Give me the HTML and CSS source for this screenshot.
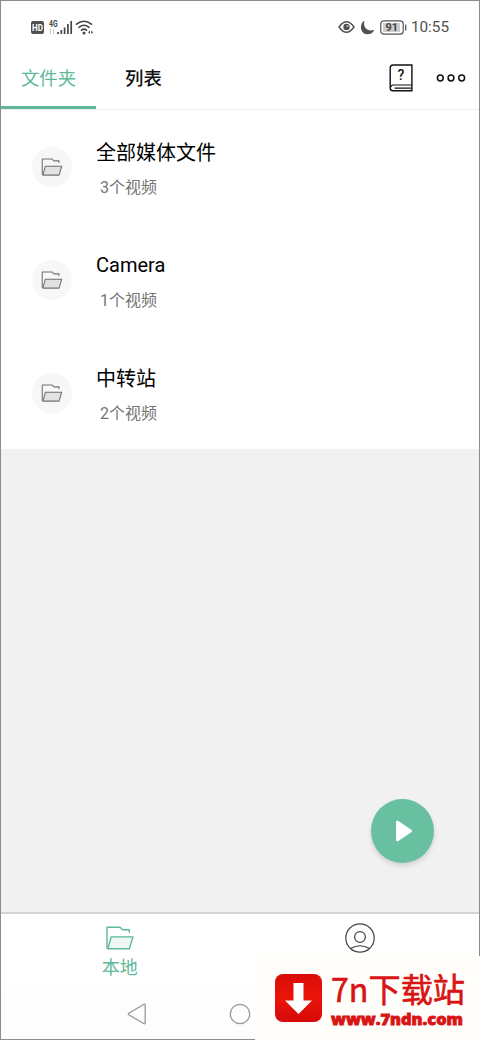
FILE: index.html
```html
<!DOCTYPE html>
<html lang="zh-CN">
<head>
<meta charset="utf-8">
<title>文件夹</title>
<link rel="stylesheet" href="styles.css">
</head>
<body>
<svg class="defs" width="0" height="0">
  <symbol id="folder" viewBox="0 0 28 24">
    <path class="back" d="M1 22.8V1.3h13l2.6 2.5h6.7v3"/>
    <path class="front" d="M5.2 10.9H27l-3.6 11.9H1.8Z"/>
  </symbol>
</svg>
<div class="phone">
  <div class="status">
    <svg class="status-left" width="66" height="18" viewBox="0 0 66 18">
      <rect x="1" y="3" width="13" height="13" rx="2" fill="#505050"/>
      <text x="7.5" y="12.8" class="hd" text-anchor="middle" textLength="11" lengthAdjust="spacingAndGlyphs">HD</text>
      <text x="19" y="8.500" class="net" textLength="8.500" lengthAdjust="spacingAndGlyphs">4G</text>
      <path d="M20.5 16v-5m-1 1 1-1M23.5 11v5m1-1-1 1" stroke="#bbb" fill="none" stroke-width=".8"/>
      <path d="M28 16v-2M31.300 16v-4M34.600 16V9.500M37.900 16V6M41.200 16V3" stroke="#444" stroke-width="1.700" fill="none"/>
      <g fill="none" stroke="#444" stroke-width="1.600" stroke-linecap="round">
        <path d="M46.500 6.200q7.500-5.800 15 0M49 9.300q5-4 10 0M51.500 12.200q2.500-2.200 5 0"/>
      </g>
      <circle cx="54" cy="15" r="1.500" fill="#444"/>
      <path d="m60 12.500-2 1.800 2 1.800zm1.200 0 2 1.800-2 1.800z" fill="#555"/>
    </svg>
    <div class="status-right">
      <svg width="17" height="14" viewBox="0 0 17 14"><path d="M1 7q7.500-10.500 15 0-7.500 10.500-15 0Z" fill="none" stroke="#505050" stroke-width="1.400"/><circle cx="8.500" cy="7" r="3.200" fill="#505050"/><circle cx="9.500" cy="6" r="1" fill="#bbb"/></svg>
      <svg class="moon" width="15" height="15" viewBox="0 0 15 15"><path d="M4.500.8C-1 3.500-.2 14.200 7.500 14.200c3.500 0 6-2 6.800-4.500C8 12.500 2.500 7.500 4.500.8Z" fill="#505050"/></svg>
      <svg class="battery" width="27" height="15" viewBox="0 0 27 15"><rect x=".8" y=".8" width="22.400" height="13.400" rx="3" fill="#fff" stroke="#555" stroke-width="1.200"/><rect x="3" y="3" width="17" height="9" fill="#ccc"/><path d="M25.700 4.500v6" stroke="#555" stroke-width="1.300"/><text x="11.700" y="11.400" class="level" text-anchor="middle">91</text></svg>
      <span class="clock">10:55</span>
    </div>
  </div>
  <div class="tabs">
    <div class="tab active">文件夹</div>
    <div class="tab">列表</div>
    <div class="actions">
      <svg width="24" height="28" viewBox="0 0 24 28"><path d="M22.900 1H4Q1.200 1 1.200 4v20q0 2.800 2.800 2.800h18.900Z" fill="#fff" stroke="#111" stroke-width="1.400"/><path d="M1.500 23.500q.5-2.500 3-2.500h18.400M5.500 24.200h17" fill="none" stroke="#111" stroke-width="1.200"/><text x="12" y="15.500" class="question" text-anchor="middle">?</text></svg>
      <svg width="30" height="10" viewBox="0 0 30 10"><g fill="none" stroke="#111" stroke-width="1.500"><circle cx="4.300" cy="5" r="2.900"/><circle cx="15" cy="5" r="2.900"/><circle cx="25.700" cy="5" r="2.900"/></g></svg>
    </div>
  </div>
  <div class="list">
    <div class="row"><div class="thumb"><svg width="22" height="18"><use href="#folder"/></svg></div><div class="info"><div class="name">全部媒体文件</div><div class="count">3个视频</div></div></div>
    <div class="row"><div class="thumb"><svg width="22" height="18"><use href="#folder"/></svg></div><div class="info"><div class="name latin">Camera</div><div class="count">1个视频</div></div></div>
    <div class="row"><div class="thumb"><svg width="22" height="18"><use href="#folder"/></svg></div><div class="info"><div class="name">中转站</div><div class="count">2个视频</div></div></div>
  </div>
  <div class="space"></div>
  <div class="bottom">
    <div class="item local"><svg width="28" height="24"><use href="#folder"/></svg><span>本地</span></div>
    <div class="item user"><svg width="30" height="30" viewBox="0 0 30 30"><g fill="none" stroke="#444" stroke-width="1.200"><circle cx="15" cy="15" r="14.200"/><circle cx="15" cy="14" r="5.400"/><path d="M5.500 25.500q9.500-5.500 19 0"/></g></svg></div>
  </div>
  <div class="nav">
    <svg width="20" height="22" viewBox="0 0 20 22"><path d="M17 1.300 1.800 10.200q-1 .8 0 1.600L17 20.700q1.200.4 1.200-1V2.300q0-1.400-1.200-1Z" fill="none" stroke="#999" stroke-width="1.300"/></svg>
    <svg width="22" height="22" viewBox="0 0 22 22"><circle cx="11" cy="11" r="9.700" fill="none" stroke="#999" stroke-width="1.300"/></svg>
  </div>
  <div class="fab"><svg width="18" height="22" viewBox="0 0 18 22"><path d="M2.500 2.200v17.600L15.500 11Z" fill="#fff" stroke="#fff" stroke-width="3" stroke-linejoin="round"/></svg></div>
  <div class="mark">
    <svg width="47" height="48" viewBox="0 0 47 48"><defs><linearGradient id="red" x2="0" y2="1"><stop stop-color="#d90d0b"/><stop offset=".5" stop-color="#ec1408"/><stop offset="1" stop-color="#d50a0a"/></linearGradient></defs><rect width="47" height="48" rx="8" fill="url(#red)"/><path d="M18.500 9h10v17.500H37L23.500 40 10 26.500h8.500Z" fill="#fff"/></svg>
    <svg class="brand" width="140" height="84" viewBox="0 0 140 84"><text x="1" y="46" class="brand-name" textLength="134" lengthAdjust="spacingAndGlyphs">7n下载站</text><text x="1" y="69" class="brand-url" textLength="132" lengthAdjust="spacingAndGlyphs">www.7ndn.com</text></svg>
  </div>
</div>
</body>
</html>
```
FILE: styles.css
```css
* { box-sizing: border-box; }
body { margin: 0; font-family: Roboto, "Noto Sans CJK SC", sans-serif; color: #111; }
svg { display: block; flex: none; }
.defs { position: absolute; }
.phone { position: relative; width: 480px; height: 1040px; display: flex; flex-direction: column; background: #fff; border: 1px solid #8c8c8c; }
.status { height: 45px; padding: 7px 30px 0 29px; display: flex; align-items: center; justify-content: space-between; }
.status-right { display: flex; align-items: center; }
.moon { margin-left: 5px; }
.battery { margin-left: 5px; }
.clock { margin-left: 4px; font-size: 15.3px; line-height: 18px; color: #505050; }
.hd { font: bold 9px Roboto, sans-serif; fill: #fff; }
.net { font: bold 8.5px Roboto, sans-serif; fill: #444; }
.level { font: bold 11px Roboto, sans-serif; fill: #444; }
.tabs { height: 64px; display: flex; border-bottom: 1px solid #eee; }
.tab { width: 95px; height: 63px; text-align: center; font-size: 18.4px; line-height: 66px; font-weight: 500; }
.tab.active { color: #5fb898; border-bottom: 3px solid #5fb898; font-weight: 400; }
.actions { flex: 1; display: flex; align-items: center; justify-content: flex-end; gap: 23px; padding-right: 13px; }
.question { font: 500 14px Roboto, sans-serif; fill: #111; }
.row { height: 113px; display: flex; align-items: center; padding-left: 31px; }
.thumb { width: 40px; height: 40px; border-radius: 50%; background: #f7f7f7; display: flex; align-items: center; justify-content: center; color: #707070; --front: #e2e2e2; }
.back, .front { stroke: currentColor; stroke-width: 1.4; stroke-linejoin: round; fill: none; }
.front { fill: var(--front); }
.info { margin-left: 24px; padding-top: 4px; }
.name { font-size: 20px; line-height: 28px; color: #000; }
.latin { padding-bottom: 1px; line-height: 27px; }
.count { margin: 10px 0 0 4px; font-size: 16px; line-height: 22px; color: #757575; }
.space { flex: 1; background: #f1f1f1; }
.bottom { height: 78px; display: flex; background: #fff; border-top: 2px solid #d4d4d4; }
.item { flex: 1; display: flex; flex-direction: column; align-items: center; padding-top: 9px; }
.local { padding: 12px 3px 0 0; color: #5fb898; --front: #edf8f4; font-size: 18px; line-height: 26px; }
.local span { margin-top: 5px; }
.nav { height: 49px; padding: 13px 0 0 126px; display: flex; gap: 82px; background: #fdfdfd; }
.fab { position: absolute; left: 370px; top: 798px; width: 63px; height: 64px; border-radius: 50%; background: #68c0a0; box-shadow: 0 3px 5px #0002; display: flex; align-items: center; justify-content: center; padding-left: 3px; }
.mark { position: absolute; left: 254px; top: 955px; width: 225px; height: 84px; padding-left: 20px; display: flex; align-items: center; background: #fffefa; box-shadow: 1px 1px #fffefa; }
.brand { margin-left: 8px; }
.brand-name { font: 33px "Noto Sans CJK SC", sans-serif; fill: #d91414; stroke: #d91414; stroke-width: .6px; }
.brand-url { font: 800 15px "Open Sans", sans-serif; fill: #d91414; stroke: #d91414; stroke-width: .8px; }
```
